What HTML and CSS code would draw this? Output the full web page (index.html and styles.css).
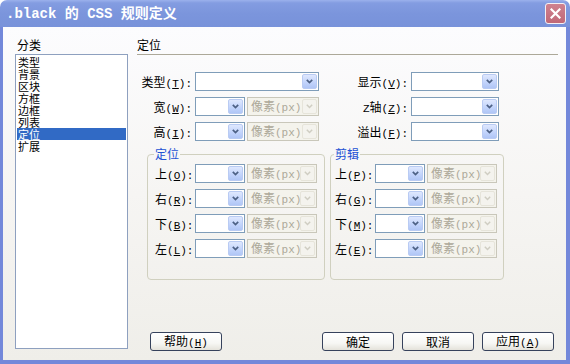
FILE: index.html
```html
<!DOCTYPE html>
<html lang="zh-CN">
<head>
<meta charset="utf-8">
<title>.black 的 CSS 规则定义</title>
<link rel="stylesheet" href="styles.css">
</head>
<body>
<div class="win">
  <div class="titlebar">
    <span class="title">.black 的 CSS 规则定义</span>
    <span class="close"><svg width="11" height="11" viewBox="0 0 11 11"><path d="M1.5 1.5 L9.5 9.5 M9.5 1.5 L1.5 9.5" stroke="#fff" stroke-width="2.2" stroke-linecap="square"/></svg></span>
  </div>
  <div class="body">
    <div class="cat">
      <div class="cat-label">分类</div>
      <ul class="list">
        <li>类型</li>
        <li>背景</li>
        <li>区块</li>
        <li>方框</li>
        <li>边框</li>
        <li>列表</li>
        <li class="on">定位</li>
        <li>扩展</li>
      </ul>
    </div>
    <div class="main">
      <div class="heading">定位</div>
      <div class="top">
        <div class="grid-l">
          <label class="lbl r">类型<span class="ak">(<u>T</u>):</span></label>
          <div class="sel"><span class="val"></span><span class="arr"><svg width="7" height="5" viewBox="0 0 7 5"><path d="M0.8 0.8 L3.5 3.5 L6.2 0.8" fill="none" stroke="#4d6185" stroke-width="1.7"/></svg></span></div>
          <label class="lbl r">宽<span class="ak">(<u>W</u>):</span></label>
          <div class="pair">
            <div class="sel w50"><span class="val"></span><span class="arr"><svg width="7" height="5" viewBox="0 0 7 5"><path d="M0.8 0.8 L3.5 3.5 L6.2 0.8" fill="none" stroke="#4d6185" stroke-width="1.7"/></svg></span></div>
            <div class="sel dis w72"><span class="val">像素<span class="ak">(px)</span></span><span class="arr"><svg width="7" height="5" viewBox="0 0 7 5"><path d="M0.8 0.8 L3.5 3.5 L6.2 0.8" fill="none" stroke="#cfcdc2" stroke-width="1.5"/></svg></span></div>
          </div>
          <label class="lbl r">高<span class="ak">(<u>I</u>):</span></label>
          <div class="pair">
            <div class="sel w50"><span class="val"></span><span class="arr"><svg width="7" height="5" viewBox="0 0 7 5"><path d="M0.8 0.8 L3.5 3.5 L6.2 0.8" fill="none" stroke="#4d6185" stroke-width="1.7"/></svg></span></div>
            <div class="sel dis w72"><span class="val">像素<span class="ak">(px)</span></span><span class="arr"><svg width="7" height="5" viewBox="0 0 7 5"><path d="M0.8 0.8 L3.5 3.5 L6.2 0.8" fill="none" stroke="#cfcdc2" stroke-width="1.5"/></svg></span></div>
          </div>
        </div>
        <div class="grid-r">
          <label class="lbl r">显示<span class="ak">(<u>V</u>):</span></label>
          <div class="sel"><span class="val"></span><span class="arr"><svg width="7" height="5" viewBox="0 0 7 5"><path d="M0.8 0.8 L3.5 3.5 L6.2 0.8" fill="none" stroke="#4d6185" stroke-width="1.7"/></svg></span></div>
          <label class="lbl r"><span class="ak">Z</span>轴<span class="ak">(<u>Z</u>):</span></label>
          <div class="sel"><span class="val"></span><span class="arr"><svg width="7" height="5" viewBox="0 0 7 5"><path d="M0.8 0.8 L3.5 3.5 L6.2 0.8" fill="none" stroke="#4d6185" stroke-width="1.7"/></svg></span></div>
          <label class="lbl r">溢出<span class="ak">(<u>F</u>):</span></label>
          <div class="sel"><span class="val"></span><span class="arr"><svg width="7" height="5" viewBox="0 0 7 5"><path d="M0.8 0.8 L3.5 3.5 L6.2 0.8" fill="none" stroke="#4d6185" stroke-width="1.7"/></svg></span></div>
        </div>
      </div>
      <div class="groups">
        <fieldset class="grp g1">
          <legend>定位</legend>
          <div class="grid-g">
            <label class="lbl">上<span class="ak">(<u>O</u>):</span></label>
            <div class="sel"><span class="val"></span><span class="arr"><svg width="7" height="5" viewBox="0 0 7 5"><path d="M0.8 0.8 L3.5 3.5 L6.2 0.8" fill="none" stroke="#4d6185" stroke-width="1.7"/></svg></span></div>
            <div class="sel dis"><span class="val">像素<span class="ak">(px)</span></span><span class="arr"><svg width="7" height="5" viewBox="0 0 7 5"><path d="M0.8 0.8 L3.5 3.5 L6.2 0.8" fill="none" stroke="#cfcdc2" stroke-width="1.5"/></svg></span></div>
            <label class="lbl">右<span class="ak">(<u>R</u>):</span></label>
            <div class="sel"><span class="val"></span><span class="arr"><svg width="7" height="5" viewBox="0 0 7 5"><path d="M0.8 0.8 L3.5 3.5 L6.2 0.8" fill="none" stroke="#4d6185" stroke-width="1.7"/></svg></span></div>
            <div class="sel dis"><span class="val">像素<span class="ak">(px)</span></span><span class="arr"><svg width="7" height="5" viewBox="0 0 7 5"><path d="M0.8 0.8 L3.5 3.5 L6.2 0.8" fill="none" stroke="#cfcdc2" stroke-width="1.5"/></svg></span></div>
            <label class="lbl">下<span class="ak">(<u>B</u>):</span></label>
            <div class="sel"><span class="val"></span><span class="arr"><svg width="7" height="5" viewBox="0 0 7 5"><path d="M0.8 0.8 L3.5 3.5 L6.2 0.8" fill="none" stroke="#4d6185" stroke-width="1.7"/></svg></span></div>
            <div class="sel dis"><span class="val">像素<span class="ak">(px)</span></span><span class="arr"><svg width="7" height="5" viewBox="0 0 7 5"><path d="M0.8 0.8 L3.5 3.5 L6.2 0.8" fill="none" stroke="#cfcdc2" stroke-width="1.5"/></svg></span></div>
            <label class="lbl">左<span class="ak">(<u>L</u>):</span></label>
            <div class="sel"><span class="val"></span><span class="arr"><svg width="7" height="5" viewBox="0 0 7 5"><path d="M0.8 0.8 L3.5 3.5 L6.2 0.8" fill="none" stroke="#4d6185" stroke-width="1.7"/></svg></span></div>
            <div class="sel dis"><span class="val">像素<span class="ak">(px)</span></span><span class="arr"><svg width="7" height="5" viewBox="0 0 7 5"><path d="M0.8 0.8 L3.5 3.5 L6.2 0.8" fill="none" stroke="#cfcdc2" stroke-width="1.5"/></svg></span></div>
          </div>
        </fieldset>
        <fieldset class="grp g2">
          <legend>剪辑</legend>
          <div class="grid-g">
            <label class="lbl">上<span class="ak">(<u>P</u>):</span></label>
            <div class="sel"><span class="val"></span><span class="arr"><svg width="7" height="5" viewBox="0 0 7 5"><path d="M0.8 0.8 L3.5 3.5 L6.2 0.8" fill="none" stroke="#4d6185" stroke-width="1.7"/></svg></span></div>
            <div class="sel dis"><span class="val">像素<span class="ak">(px)</span></span><span class="arr"><svg width="7" height="5" viewBox="0 0 7 5"><path d="M0.8 0.8 L3.5 3.5 L6.2 0.8" fill="none" stroke="#cfcdc2" stroke-width="1.5"/></svg></span></div>
            <label class="lbl">右<span class="ak">(<u>G</u>):</span></label>
            <div class="sel"><span class="val"></span><span class="arr"><svg width="7" height="5" viewBox="0 0 7 5"><path d="M0.8 0.8 L3.5 3.5 L6.2 0.8" fill="none" stroke="#4d6185" stroke-width="1.7"/></svg></span></div>
            <div class="sel dis"><span class="val">像素<span class="ak">(px)</span></span><span class="arr"><svg width="7" height="5" viewBox="0 0 7 5"><path d="M0.8 0.8 L3.5 3.5 L6.2 0.8" fill="none" stroke="#cfcdc2" stroke-width="1.5"/></svg></span></div>
            <label class="lbl">下<span class="ak">(<u>M</u>):</span></label>
            <div class="sel"><span class="val"></span><span class="arr"><svg width="7" height="5" viewBox="0 0 7 5"><path d="M0.8 0.8 L3.5 3.5 L6.2 0.8" fill="none" stroke="#4d6185" stroke-width="1.7"/></svg></span></div>
            <div class="sel dis"><span class="val">像素<span class="ak">(px)</span></span><span class="arr"><svg width="7" height="5" viewBox="0 0 7 5"><path d="M0.8 0.8 L3.5 3.5 L6.2 0.8" fill="none" stroke="#cfcdc2" stroke-width="1.5"/></svg></span></div>
            <label class="lbl">左<span class="ak">(<u>E</u>):</span></label>
            <div class="sel"><span class="val"></span><span class="arr"><svg width="7" height="5" viewBox="0 0 7 5"><path d="M0.8 0.8 L3.5 3.5 L6.2 0.8" fill="none" stroke="#4d6185" stroke-width="1.7"/></svg></span></div>
            <div class="sel dis"><span class="val">像素<span class="ak">(px)</span></span><span class="arr"><svg width="7" height="5" viewBox="0 0 7 5"><path d="M0.8 0.8 L3.5 3.5 L6.2 0.8" fill="none" stroke="#cfcdc2" stroke-width="1.5"/></svg></span></div>
          </div>
        </fieldset>
      </div>
      <div class="buttons">
        <button class="btn help">帮助<span class="ak">(<u>H</u>)</span></button>
        <div class="btn-group">
          <button class="btn">确定</button>
          <button class="btn">取消</button>
          <button class="btn">应用<span class="ak">(<u>A</u>)</span></button>
        </div>
      </div>
    </div>
  </div>
</div>
</body>
</html>
```
FILE: styles.css
```css
html, body {
  margin: 0;
  padding: 0;
  width: 570px;
  height: 364px;
  overflow: hidden;
  background: #ffffff;
}

.win {
  width: 570px;
  height: 364px;
  display: flex;
  flex-direction: column;
  font-family: "Noto Sans CJK SC", sans-serif;
  font-size: 12px;
  color: #000;
}

.titlebar {
  height: 27px;
  flex: none;
  display: flex;
  align-items: center;
  padding: 0 4px 0 6px;
  background: linear-gradient(#9bb1ec 0px, #839ce1 3px, #7b95dc 14px, #7892da 27px);
  border-radius: 7px 7px 0 0;
}

.title {
  flex: 1;
  font-family: "Liberation Mono", "Noto Sans CJK SC", monospace;
  font-weight: bold;
  font-size: 14px;
  line-height: 16px;
  color: #ffffff;
  white-space: pre;
  padding-top: 1px;
}

.close {
  width: 21px;
  height: 21px;
  box-sizing: border-box;
  border: 1px solid #f4f0f4;
  border-radius: 3px;
  background: linear-gradient(#cf8290, #c06877);
  display: flex;
  align-items: center;
  justify-content: center;
}

.body {
  flex: 1;
  display: flex;
  border-style: solid;
  border-color: #7388da;
  border-width: 0 4px 4px 3px;
  background: linear-gradient(#fcfcfe, #f6f5f3 50%, #efeee9);
  padding: 11px 0 9px 12px;
  min-height: 0;
}

.cat {
  width: 113px;
  display: flex;
  flex-direction: column;
  margin-bottom: 2px;
}

.cat-label {
  line-height: 14px;
  height: 16px;
  padding-left: 2px;
}

.list {
  flex: 1;
  margin: 0;
  padding: 1px;
  list-style: none;
  border: 1px solid #8ea0bf;
  background: #ffffff;
}

.list li {
  height: 12px;
  line-height: 12px;
  font-size: 11px;
  padding-left: 1px;
}

.list li.on {
  background: #316ac5;
  color: #ffffff;
}

.main {
  margin-left: 9px;
  width: 421px;
  display: flex;
  flex-direction: column;
}

.heading {
  line-height: 14px;
  padding-bottom: 2px;
  border-bottom: 1px solid #aca899;
}

.top {
  display: flex;
  margin-top: 17px;
}

.grid-l {
  display: grid;
  grid-template-columns: 55px 124px;
  grid-auto-rows: 19px;
  column-gap: 3px;
  row-gap: 6px;
}

.grid-r {
  margin-left: 21px;
  display: grid;
  grid-template-columns: 68px 88px;
  grid-auto-rows: 19px;
  column-gap: 3px;
  row-gap: 6px;
}

.lbl {
  line-height: 19px;
  white-space: nowrap;
}

.lbl.r {
  text-align: right;
}

.ak {
  font-family: "Liberation Mono", monospace;
  font-size: 11px;
}

.pair {
  display: flex;
  gap: 2px;
}

.sel {
  height: 19px;
  box-sizing: border-box;
  border: 1px solid #7f9db9;
  background: #ffffff;
  display: flex;
  align-items: center;
  justify-content: space-between;
  padding: 1px;
  min-width: 0;
}

.w50 { width: 50px; }
.w72 { width: 72px; }

.val {
  padding-left: 2px;
  line-height: 15px;
  white-space: nowrap;
  overflow: hidden;
}

.arr {
  width: 15px;
  height: 15px;
  box-sizing: border-box;
  flex: none;
  border: 1px solid #b9cbf3;
  border-radius: 2px;
  background: linear-gradient(#dfe8fe, #c1d3fb 60%, #b0c6f6);
  display: flex;
  align-items: center;
  justify-content: center;
}

.sel.dis {
  border-color: #c9c7ba;
  background: #f4f3ec;
}

.sel.dis .val {
  color: #aca899;
}

.sel.dis .arr {
  border-color: #e6e4da;
  background: #f4f3ee;
}

.groups {
  display: flex;
  gap: 5px;
  margin-top: 6px;
  margin-left: 10px;
}

.grp {
  margin: 0;
  min-width: 0;
  box-sizing: border-box;
  border: 1px solid #d0d0bf;
  border-radius: 4px;
  padding: 3px 5px 21px 7px;
}

.grp.g1 {
  width: 178px;
}

.grp.g2 {
  width: 174px;
  padding-left: 4px;
  padding-right: 4px;
}

.grp legend {
  padding: 0 1px;
  margin-left: -1px;
  line-height: 14px;
  color: #2352d4;
}

.grid-g {
  display: grid;
  grid-template-columns: 40px 50px 72px;
  grid-auto-rows: 19px;
  column-gap: 0;
  row-gap: 6px;
}

.grid-g .sel.dis {
  margin-left: 2px;
}

.buttons {
  margin-top: auto;
  display: flex;
  align-items: center;
  padding-left: 13px;
  padding-right: 4px;
}

.btn-group {
  margin-left: auto;
  display: flex;
  gap: 8px;
}

.btn {
  width: 72px;
  height: 19px;
  box-sizing: border-box;
  padding: 0;
  border: 1px solid #36425c;
  border-radius: 3px;
  background: linear-gradient(#ffffff, #f7f7f4 60%, #e4e2da);
  font-family: "Noto Sans CJK SC", sans-serif;
  font-size: 12px;
  line-height: 16px;
  color: #000;
  text-align: center;
}
```
